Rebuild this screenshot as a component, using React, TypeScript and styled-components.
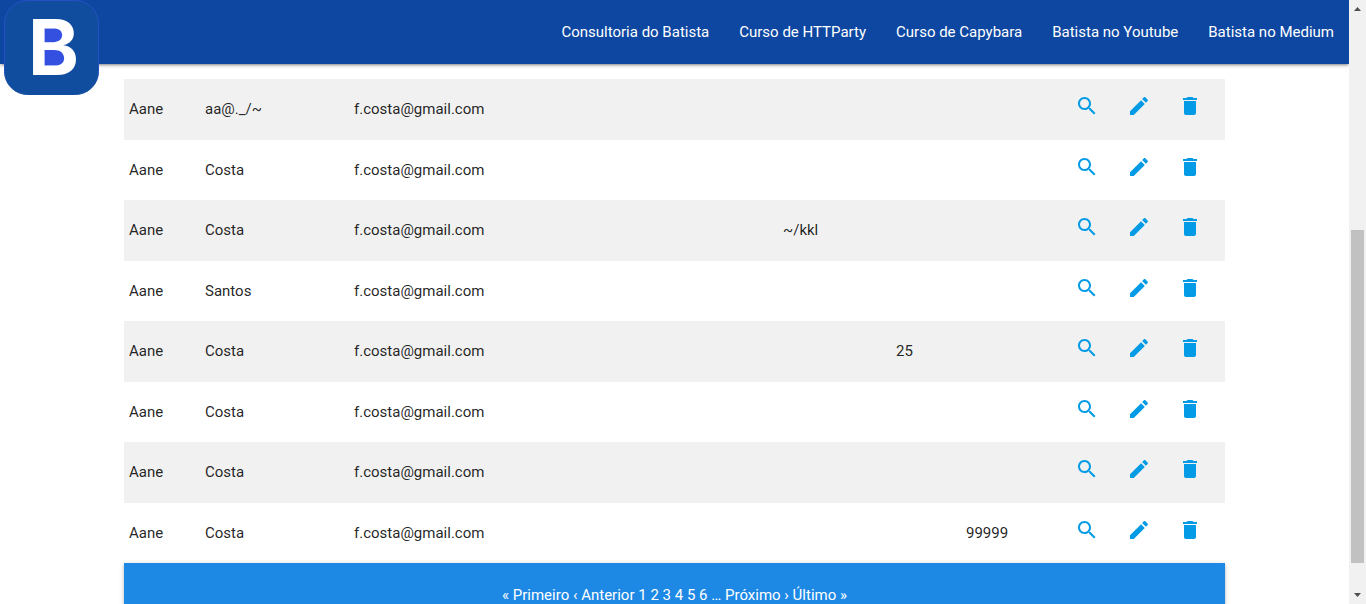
import React from "react";
import styled, { createGlobalStyle } from "styled-components";

const GlobalStyle = createGlobalStyle`
  *, *::before, *::after { box-sizing: border-box; }
  body {
    margin: 0;
    background: #fff;
    color: rgba(0, 0, 0, 0.87);
    font-family: Roboto, "Liberation Sans", sans-serif;
    font-size: 15px;
    line-height: 24px;
  }
  a { color: inherit; text-decoration: none; }
`;

const Shell = styled.div`
  display: flex;
  height: 100vh;
  overflow: hidden;
`;

const Page = styled.div`
  flex: 1;
  min-width: 0;
  overflow: hidden;
`;

const Header = styled.header`
  position: relative;
  display: flex;
  justify-content: flex-end;
  height: 64px;
  background: #0d47a1;
  color: #fff;
  box-shadow: 0 2px 2px 0 rgba(0, 0, 0, 0.14), 0 3px 1px -2px rgba(0, 0, 0, 0.12),
    0 1px 5px 0 rgba(0, 0, 0, 0.2);
`;

const Logo = styled.a`
  position: absolute;
  top: 0;
  left: 4px;
  svg { display: block; }
`;

const NavLinks = styled.nav`
  display: flex;
`;

const NavLink = styled.a`
  padding: 0 15px;
  line-height: 64px;
  white-space: nowrap;
`;

const Main = styled.main`
  padding: 15px 124px 0;
`;

const UserTable = styled.table`
  width: 100%;
  table-layout: fixed;
  border-collapse: collapse;
`;

const Column = styled.col<{ $width?: number }>`
  width: ${({ $width }) => ($width ? `${$width}px` : "auto")};
`;

const Row = styled.tr`
  height: 60px;
  &:nth-child(odd) {
    height: 61px;
    background: #f1f1f1;
  }
`;

const Cell = styled.td`
  padding: 18px 5px 0;
  vertical-align: top;
  white-space: nowrap;
`;

const ActionCell = styled.td`
  padding: 15px 5px 0;
  vertical-align: top;
`;

const Action = styled.a`
  display: block;
  width: 24px;
  height: 24px;
  color: #039be5;
  svg { display: block; }
`;

const Pagination = styled.nav`
  height: 64px;
  line-height: 64px;
  text-align: center;
  background: #1e88e5;
  color: #fff;
  box-shadow: 0 2px 2px 0 rgba(0, 0, 0, 0.14), 0 3px 1px -2px rgba(0, 0, 0, 0.12),
    0 1px 5px 0 rgba(0, 0, 0, 0.2);
`;

const ScrollTrack = styled.div`
  display: flex;
  flex-direction: column;
  align-items: center;
  width: 17px;
  background: #f1f1f1;
`;

const ScrollArrow = styled.svg`
  display: block;
  flex: none;
`;

const ScrollLane = styled.div`
  display: flex;
  flex-direction: column;
  flex: 1;
  width: 13px;
`;

const ScrollSpace = styled.div<{ $share: number }>`
  flex: ${({ $share }) => $share} 0 0;
`;

const ScrollThumb = styled(ScrollSpace)`
  background: #c1c1c1;
`;

const links = [
  "Consultoria do Batista",
  "Curso de HTTParty",
  "Curso de Capybara",
  "Batista no Youtube",
  "Batista no Medium",
];

type User = { last: string; job?: string; gender?: string; age?: string };

const users: User[] = [
  { last: "aa@._/~" },
  { last: "Costa" },
  { last: "Costa", job: "~/kkl" },
  { last: "Santos" },
  { last: "Costa", gender: "25" },
  { last: "Costa" },
  { last: "Costa" },
  { last: "Costa", age: "99999" },
];

const actions = [
  {
    label: "Visualizar",
    path: "M15.5 14h-.79l-.28-.27C15.41 12.59 16 11.11 16 9.5 16 5.91 13.09 3 9.5 3S3 5.91 3 9.5 5.91 16 9.5 16c1.61 0 3.09-.59 4.23-1.57l.27.28v.79l5 4.99L20.49 19l-4.99-5zm-6 0C7.01 14 5 11.99 5 9.5S7.01 5 9.5 5 14 7.01 14 9.5 11.99 14 9.5 14z",
  },
  {
    label: "Editar",
    path: "M3 17.25V21h3.75L17.81 9.94l-3.75-3.75L3 17.25zM20.71 7.04c.39-.39.39-1.02 0-1.41l-2.34-2.34c-.39-.39-1.02-.39-1.41 0l-1.83 1.83 3.75 3.75 1.83-1.83z",
  },
  {
    label: "Excluir",
    path: "M6 19c0 1.1.9 2 2 2h8c1.1 0 2-.9 2-2V7H6v12zM19 4h-3.5l-1-1h-5l-1 1H5v2h14V4z",
  },
];

const pages = ["« Primeiro", "‹ Anterior", "1", "2", "3", "4", "5", "6", "…", "Próximo ›", "Último »"];

function LogoMark() {
  return (
    <svg width="95" height="95" viewBox="0 0 95 95" aria-hidden="true">
      <defs>
        <linearGradient id="logo-edge" x1="0" y1="0" x2="0" y2="1">
          <stop offset="0" stopColor="#2450c4" />
          <stop offset="0.7" stopColor="#2450c4" />
          <stop offset="0.85" stopColor="#114d9f" />
        </linearGradient>
      </defs>
      <rect x="0.5" y="0.5" width="94" height="94" rx="23" fill="#114d9f" stroke="url(#logo-edge)" />
      <rect x="34" y="26" width="28" height="42" fill="#3350e0" />
      <text x="24" y="75" fill="#fff" fontFamily="Inter, sans-serif" fontWeight="700" fontSize="77">
        B
      </text>
    </svg>
  );
}

export default function App() {
  return (
    <>
      <GlobalStyle />
      <Shell>
        <Page>
          <Header>
            <Logo href="#" aria-label="Batista">
              <LogoMark />
            </Logo>
            <NavLinks>
              {links.map((link) => (
                <NavLink href="#" key={link}>{link}</NavLink>
              ))}
            </NavLinks>
          </Header>
          <Main>
            <UserTable>
              <colgroup>
                <Column $width={76} />
                <Column $width={149} />
                <Column />
                <Column $width={113} />
                <Column $width={70} />
                <Column $width={109} />
                <Column $width={52} />
                <Column $width={51} />
                <Column $width={52} />
              </colgroup>
              <tbody>
                {users.map((user, index) => (
                  <Row key={index}>
                    <Cell>Aane</Cell>
                    <Cell>{user.last}</Cell>
                    <Cell>f.costa@gmail.com</Cell>
                    <Cell>{user.job}</Cell>
                    <Cell>{user.gender}</Cell>
                    <Cell>{user.age}</Cell>
                    {actions.map(({ label, path }) => (
                      <ActionCell key={label}>
                        <Action href="#" aria-label={label}>
                          <svg width="24" height="24" viewBox="0 0 24 24" fill="currentColor">
                            <path d={path} />
                          </svg>
                        </Action>
                      </ActionCell>
                    ))}
                  </Row>
                ))}
              </tbody>
            </UserTable>
            <Pagination>
              {pages.map((page) => (
                <React.Fragment key={page}>
                  {page === "1" || page === "…" ? <span>{page}</span> : <a href="#">{page}</a>}{" "}
                </React.Fragment>
              ))}
            </Pagination>
          </Main>
        </Page>
        <ScrollTrack aria-hidden="true">
          <ScrollArrow width="17" height="17" viewBox="0 0 17 17" fill="#505050">
            <path d="M5 11h7L8.500 7z" />
          </ScrollArrow>
          <ScrollLane>
            <ScrollSpace $share={213} />
            <ScrollThumb $share={333} />
            <ScrollSpace $share={24} />
          </ScrollLane>
          <ScrollArrow width="17" height="17" viewBox="0 0 17 17" fill="#505050">
            <path d="M5 6h7l-3.500 4z" />
          </ScrollArrow>
        </ScrollTrack>
      </Shell>
    </>
  );
}
